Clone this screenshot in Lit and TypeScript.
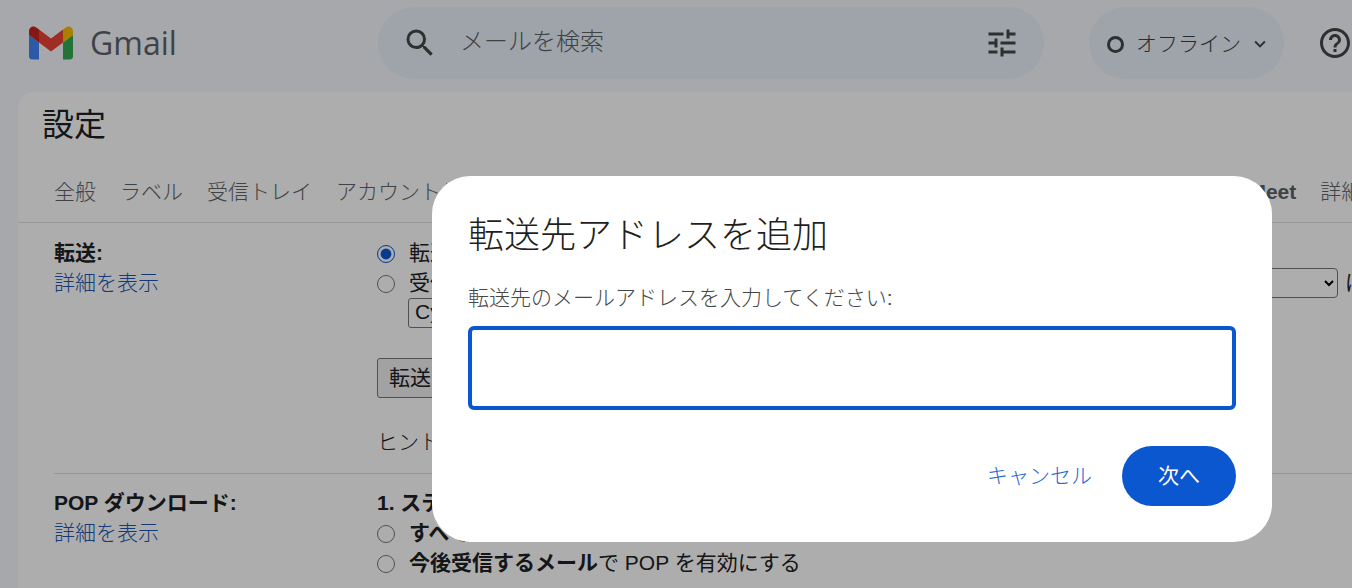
import { LitElement, html, css } from "lit";
import { customElement } from "lit/decorators.js";

@customElement("app-root")
export class AppRoot extends LitElement {
  static styles = css`
    :host {
      display: block;
      position: relative;
      width: 1352px;
      height: 588px;
      overflow: hidden;
      background: #f6f8fc;
      color: #202124;
      font-family: "Liberation Sans", "Noto Sans CJK JP", sans-serif;
      font-size: 21px;
      line-height: 30px;
    }
    .topbar {
      display: flex;
      align-items: center;
      height: 86px;
      padding-left: 29px;
    }
    .brand {
      display: flex;
      align-items: center;
      gap: 17px;
      width: 349px;
      flex: none;
    }
    .logo {
      width: 44px;
      height: 34px;
      flex: none;
    }
    .wordmark {
      font-family: "Open Sans", sans-serif;
      font-size: 32px;
      color: #5f6368;
    }
    .search {
      display: flex;
      align-items: center;
      width: 666px;
      height: 72px;
      flex: none;
      box-sizing: border-box;
      padding: 0 24px 0 24px;
      border-radius: 36px;
      background: #eaf1fb;
      color: #5f6368;
      font-size: 24px;
    }
    .search .ph {
      flex: 1;
      margin-left: 22px;
      padding-bottom: 2px;
      font-weight: 300;
    }
    .icon {
      fill: #444746;
      flex: none;
    }
    .status {
      display: flex;
      align-items: center;
      width: 195px;
      height: 72px;
      flex: none;
      box-sizing: border-box;
      margin-left: 45px;
      padding: 2px 0 0 18px;
      border-radius: 36px;
      background: #eaf1fb;
      color: #3c4043;
      font-size: 21px;
      font-weight: 300;
    }
    .dot {
      width: 11px;
      height: 11px;
      margin-right: 12px;
      border: 3px solid #444746;
      border-radius: 50%;
      flex: none;
    }
    .status svg {
      margin-left: 8px;
    }
    .help {
      margin-left: 33px;
    }
    .panel {
      margin: 6px 0 0 18px;
      height: 496px;
      background: #fff;
      border-radius: 16px 0 0 0;
      overflow: hidden;
    }
    .title {
      height: 66px;
      padding-left: 24px;
      font-size: 32px;
      line-height: 66px;
      color: #202124;
    }
    .tabs {
      display: flex;
      gap: 24px;
      height: 65px;
      box-sizing: border-box;
      align-items: center;
      padding: 4px 0 0 36px;
      border-bottom: 1px solid #e0e0e0;
      color: #5f6368;
      font-weight: 300;
      white-space: nowrap;
    }
    .tabs span {
      flex: none;
    }
    .tabs .meet {
      margin-left: 8px;
      font-weight: 700;
    }
    .tabs .meet span {
      font-weight: 300;
    }
    .rows {
      padding: 15px 0 0 36px;
    }
    .row {
      display: grid;
      grid-template-columns: 323px 1fr;
    }
    .row + .row {
      margin-top: 16px;
      padding-top: 14px;
      border-top: 1px solid #dadce0;
    }
    .name {
      font-weight: 700;
    }
    a {
      color: #1f56b0;
      font-weight: 300;
      text-decoration: none;
      display: block;
    }
    .line {
      display: flex;
      align-items: center;
      height: 30px;
      white-space: nowrap;
    }
    .line input {
      width: 18px;
      height: 18px;
      margin: 2px 14px 0 0;
      flex: none;
      accent-color: #0b57d0;
    }
    .fwd-select {
      height: 30px;
      box-sizing: border-box;
      margin-left: 31px;
      width: 170px;
      padding: 0 6px;
      font: inherit;
      line-height: 26px;
      background: #fff;
      border: 1px solid #767676;
      border-radius: 3px;
      color: #202124;
    }
    .right-select {
      position: absolute;
      left: 1140px;
      width: 198px;
      height: 30px;
      font: inherit;
      background: #fff;
      border: 1px solid #767676;
      border-radius: 4px;
    }
    .add {
      display: block;
      margin-top: 30px;
      height: 40px;
      width: 250px;
      box-sizing: border-box;
      border: 1px solid #767676;
      border-radius: 3px;
      background: #efefef;
      color: #202124;
      font: inherit;
      line-height: 36px;
      text-align: left;
      padding: 0 11px;
    }
    .hint {
      margin-top: 29px;
      font-weight: 300;
    }
    .tail {
      position: absolute;
      left: 1345px;
    }
    .scrim {
      position: absolute;
      inset: 0;
      padding: 176px 0 0 432px;
      background: rgba(0, 0, 0, 0.32);
    }
    .dialog {
      display: flex;
      flex-direction: column;
      width: 840px;
      height: 366px;
      box-sizing: border-box;
      padding: 38px 36px 36px;
      border-radius: 38px;
      background: #fff;
    }
    .dialog h2 {
      margin: 0;
      font-size: 36px;
      line-height: 44px;
      font-weight: 300;
      color: #1f1f1f;
    }
    .dialog label {
      margin-top: 26px;
      font-size: 21px;
      line-height: 28px;
      font-weight: 300;
      color: #444746;
    }
    .dialog input {
      display: block;
      width: 100%;
      height: 84px;
      margin-top: 14px;
      box-sizing: border-box;
      border: 4px solid #0b57d0;
      border-radius: 6px;
      outline: none;
      background: #fff;
    }
    .actions {
      display: flex;
      justify-content: flex-end;
      align-items: center;
      gap: 30px;
      margin-top: 36px;
    }
    .actions button {
      height: 60px;
      border: none;
      padding: 0;
      font: inherit;
      cursor: pointer;
    }
    .cancel {
      background: none;
      color: #2a68d0;
      font-weight: 300 !important;
    }
    .next {
      width: 114px;
      border-radius: 30px !important;
      background: #0b57d0;
      color: #fff;
    }
  `;

  render() {
    return html`
      <div class="topbar">
        <div class="brand">
          <svg class="logo" viewBox="52 42 88 66" aria-hidden="true">
            <path fill="#4285f4" d="M58 108h14V74L52 59v43c0 3.32 2.69 6 6 6" />
            <path fill="#34a853" d="M120 108h14c3.32 0 6-2.69 6-6V59l-20 15" />
            <path fill="#fbbc04" d="M120 48v26l20-15v-8c0-7.42-8.47-11.65-14.4-7.2" />
            <path fill="#ea4335" d="M72 74V48l24 18 24-18v26L96 92" />
            <path fill="#c5221f" d="M52 51v8l20 15V48l-5.6-4.2c-5.94-4.45-14.4-.22-14.4 7.2" />
          </svg>
          <span class="wordmark">Gmail</span>
        </div>
        <div class="search">
          <svg class="icon" width="36" height="36" viewBox="0 0 24 24" aria-hidden="true">
            <path d="M15.5 14h-.79l-.28-.27A6.47 6.47 0 0 0 16 9.5 6.5 6.5 0 1 0 9.5 16c1.61 0 3.09-.59 4.23-1.57l.27.28v.79l5 4.99L20.49 19l-4.99-5zm-6 0C7.01 14 5 11.99 5 9.5S7.01 5 9.5 5 14 7.01 14 9.5 11.99 14 9.5 14z" />
          </svg>
          <span class="ph">メールを検索</span>
          <svg class="icon" width="36" height="36" viewBox="0 0 24 24" aria-hidden="true">
            <path d="M3 17v2h6v-2H3zM3 5v2h10V5H3zm10 16v-2h8v-2h-8v-2h-2v6h2zM7 9v2H3v2h4v2h2V9H7zm14 4v-2H11v2h10zm-6-4h2V7h4V5h-4V3h-2v6z" />
          </svg>
        </div>
        <div class="status">
          <span class="dot"></span>
          <span>オフライン</span>
          <svg class="icon" width="22" height="22" viewBox="0 0 24 24" aria-hidden="true">
            <path d="M7.41 8.59 12 13.17l4.59-4.58L18 10l-6 6-6-6z" />
          </svg>
        </div>
        <svg class="icon help" width="36" height="36" viewBox="0 0 24 24" aria-hidden="true">
          <path d="M11 18h2v-2h-2v2zm1-16C6.48 2 2 6.48 2 12s4.48 10 10 10 10-4.48 10-10S17.52 2 12 2zm0 18c-4.41 0-8-3.59-8-8s3.59-8 8-8 8 3.59 8 8-3.59 8-8 8zm0-14c-2.21 0-4 1.79-4 4h2c0-1.1.9-2 2-2s2 .9 2 2c0 2-3 1.75-3 5h2c0-2.25 3-2.5 3-5 0-2.21-1.79-4-4-4z" />
        </svg>
      </div>

      <div class="panel">
        <div class="title">設定</div>
        <div class="tabs">
          <span>全般</span>
          <span>ラベル</span>
          <span>受信トレイ</span>
          <span>アカウントとインポート</span>
          <span>フィルタとブロック中のアドレス</span>
          <span>メール転送と POP</span>
          <span class="meet"><span>チャットと </span>Meet</span>
          <span>詳細設定</span>
        </div>
        <div class="rows">
          <div class="row">
            <div>
              <div class="name">転送:</div>
              <a>詳細を表示</a>
            </div>
            <div>
              <div class="line"><input type="radio" name="fwd" checked /><span>転送</span></div>
              <div class="line">
                <input type="radio" name="fwd" /><span>受信</span>
                <select class="right-select"><option></option></select>
                <span class="tail">は</span>
              </div>
              <div class="line"><span class="fwd-select">Cyber</span></div>
              <button class="add">転送先アドレスを追加</button>
              <div class="hint">ヒント: フィルタを作成</div>
            </div>
          </div>
          <div class="row">
            <div>
              <div class="name">POP ダウンロード:</div>
              <a>詳細を表示</a>
            </div>
            <div>
              <div class="name">1. ステータス</div>
              <div class="line"><input type="radio" name="pop" /><b>すべて</b></div>
              <div class="line"><input type="radio" name="pop" /><span><b>今後受信するメール</b>で POP を有効にする</span></div>
            </div>
          </div>
        </div>
      </div>

      <div class="scrim">
        <div class="dialog" role="dialog">
          <h2>転送先アドレスを追加</h2>
          <label for="addr">転送先のメールアドレスを入力してください:</label>
          <input id="addr" type="text" />
          <div class="actions">
            <button class="cancel">キャンセル</button>
            <button class="next">次へ</button>
          </div>
        </div>
      </div>
    `;
  }
}
